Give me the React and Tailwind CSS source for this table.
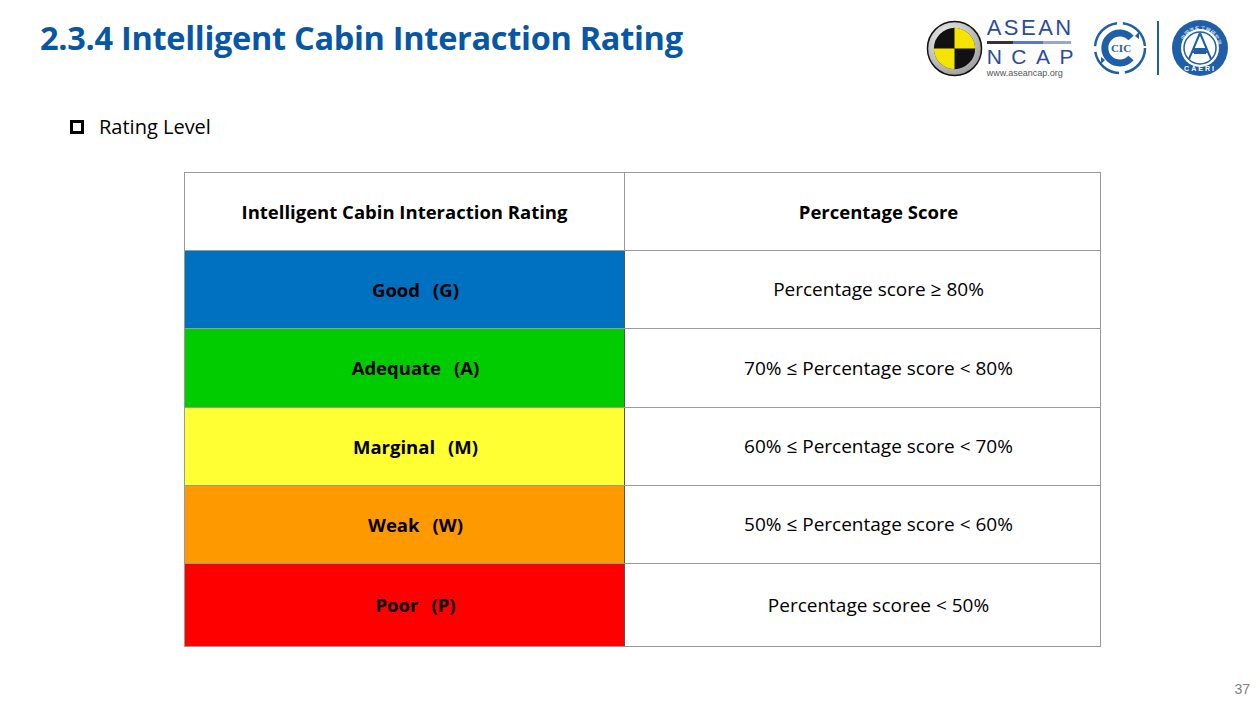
import React from "react";

const rows = [
  { label: "Good", code: "(G)", bg: "bg-[#0070c0]", text: "Percentage score ≥ 80%", h: "h-[78px]" },
  { label: "Adequate", code: "(A)", bg: "bg-[#00cc00]", text: "70% ≤ Percentage score < 80%", h: "h-[79px]" },
  { label: "Marginal", code: "(M)", bg: "bg-[#ffff33]", text: "60% ≤ Percentage score < 70%", h: "h-[78px]" },
  { label: "Weak", code: "(W)", bg: "bg-[#ff9900]", text: "50% ≤ Percentage score < 60%", h: "h-[78px]" },
  { label: "Poor", code: "(P)", bg: "bg-[#ff0000]", text: "Percentage scoree < 50%", h: "h-[82px]" },
];

function AseanLogo() {
  return (
    <div className="flex items-center gap-[4px]">
      <svg width="57" height="57" viewBox="0 0 58 58">
        <defs>
          <radialGradient id="ring" cx="0.4" cy="0.35" r="0.7">
            <stop offset="0" stopColor="#ffffff" />
            <stop offset="1" stopColor="#9a9a9a" />
          </radialGradient>
        </defs>
        <circle cx="29" cy="29" r="27.5" fill="url(#ring)" stroke="#111" strokeWidth="1.5" />
        <circle cx="29" cy="29" r="21" fill="#111" />
        <path d="M29 29 L29 8 A21 21 0 0 1 50 29 Z" fill="#f5e400" />
        <path d="M29 29 L29 50 A21 21 0 0 1 8 29 Z" fill="#f5e400" />
      </svg>
      <div className="flex flex-col" style={{ fontFamily: "'Liberation Sans', Arial, sans-serif" }}>
        <div className="text-[22px] leading-[20px] tracking-[2.5px] text-[#2b4c9b]">ASEAN</div>
        <div className="mt-[3px] flex h-[3px] w-[84px]">
          <div className="w-[26px] bg-[#333]" />
          <div className="w-[30px] bg-[#5a7bc4]" />
          <div className="w-[28px] bg-[#9aa8c8]" />
        </div>
        <div className="mt-[3px] text-[21px] leading-[19px] tracking-[9.5px] text-[#2b4c9b]">NCAP</div>
        <div className="mt-[2px] text-[9px] leading-[10px] text-[#555]">www.aseancap.org</div>
      </div>
    </div>
  );
}

function CicLogo() {
  return (
    <svg width="56" height="56" viewBox="1 1 56 56">
      <circle cx="29" cy="29" r="25" fill="none" stroke="#1f5fa8" strokeWidth="2.5" strokeDasharray="34 6" />
      <path d="M44 17 L48 13 L48 20 Z" fill="#1f5fa8" />
      <path d="M14 41 L10 45 L10 38 Z" fill="#1f5fa8" />
      <path d="M40 19 A15 15 0 1 0 40 39" fill="none" stroke="#1f5fa8" strokeWidth="7" />
      <text x="30" y="33" textAnchor="middle" fontSize="11" fontFamily="'Liberation Serif', serif" fill="#1f5fa8" fontWeight="bold">CIC</text>
    </svg>
  );
}

function CaeriLogo() {
  return (
    <svg width="58" height="58" viewBox="1 1 58 58">
      <circle cx="30" cy="30" r="28" fill="#1f5fa8" />
      <circle cx="30" cy="30" r="19" fill="#fff" />
      <circle cx="30" cy="30" r="16" fill="none" stroke="#1f5fa8" strokeWidth="1.5" />
      <path d="M30 15 L19 41 M30 15 L41 41 M22 34 L38 34" stroke="#1f5fa8" strokeWidth="2" fill="none" />
      <rect x="24" y="30" width="12" height="6" fill="#1f5fa8" />
      <text x="30" y="53" textAnchor="middle" fontSize="7" fontWeight="bold" letterSpacing="2" fill="#fff" fontFamily="'Liberation Sans', sans-serif">CAERI</text>
      <path id="arcTop" d="M12 30 A18 18 0 0 1 48 30" fill="none" />
      <text fontSize="5" fill="#fff" fontFamily="'Noto Sans CJK SC', sans-serif">
        <textPath href="#arcTop" startOffset="8">中国汽车工程研究院</textPath>
      </text>
    </svg>
  );
}

export default function App() {
  return (
    <div
      className="relative w-[1260px] h-[709px] bg-white overflow-hidden"
      style={{ fontFamily: "'Open Sans', 'Noto Sans', 'Noto Sans CJK SC', sans-serif" }}
    >
      <div className="flex items-start justify-between pl-[40px] pr-[31px] pt-[14px]">
        <h1 className="text-[32.5px] leading-[48px] font-bold text-[#0856a6] tracking-[-0.3px]">
          2.3.4 Intelligent Cabin Interaction Rating
        </h1>
        <div className="flex items-center pt-[4px]">
          <AseanLogo />
          <div className="ml-[9px] flex">
            <CicLogo />
          </div>
          <div className="ml-[9px] h-[54px] w-[2px] bg-[#1f5fa8]" />
          <div className="ml-[12px] flex">
            <CaeriLogo />
          </div>
        </div>
      </div>

      <div className="mt-[35px] ml-[70px] flex items-center gap-[15px]">
        <div className="h-[14px] w-[14px] border-[3px] border-black" />
        <span className="text-[20px] leading-[28px] text-black">Rating Level</span>
      </div>

      <div className="ml-[184px] mt-[31px] w-[917px] border border-[#999]">
        <div className="flex h-[78px] border-b border-[#999]">
          <div className="flex w-[440px] items-center justify-center border-r border-[#999] text-[18.5px] font-bold text-black">
            Intelligent Cabin Interaction Rating
          </div>
          <div className="flex flex-1 items-center justify-center pl-[32px] text-[18.5px] font-bold text-black">
            Percentage Score
          </div>
        </div>
        {rows.map((r, i) => (
          <div key={i} className={`flex ${r.h} ${i < rows.length - 1 ? "border-b border-[#999]" : ""}`}>
            <div className={`flex w-[440px] items-center justify-center gap-[13px] border-r border-[#555] pl-[22px] ${r.bg} text-[18.5px] font-bold text-black`}>
              <span>{r.label}</span>
              <span>{r.code}</span>
            </div>
            <div className="flex flex-1 items-center justify-center pl-[32px] text-[19px] text-black">{r.text}</div>
          </div>
        ))}
      </div>

      <div
        className="absolute right-[10px] bottom-[12px] text-[14px] leading-[16px] text-[#808080]"
        style={{ fontFamily: "'Liberation Sans', Arial, sans-serif" }}
      >
        37
      </div>
    </div>
  );
}
